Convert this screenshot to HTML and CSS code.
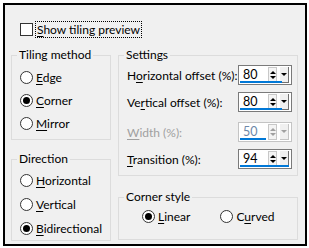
FILE: index.html
```html
<!DOCTYPE html>
<html lang="en">
<head>
  <meta charset="UTF-8">
  <title>Tiling</title>
  <link rel="stylesheet" href="styles.css">
</head>
<body>
  <div class="dialog">
    <!-- preview toggle -->
    <label class="check">
      <span class="box"></span>
      <span class="focus"><u>S</u>how tiling preview</span>
    </label>

    <div class="groups">
      <div class="col">
        <fieldset class="tiling">
          <legend>Tiling method</legend>
          <div class="radio"><span class="dot"></span><span><u>E</u>dge</span></div>
          <div class="radio"><span class="dot on"></span><span><u>C</u>orner</span></div>
          <div class="radio"><span class="dot"></span><span><u>M</u>irror</span></div>
        </fieldset>
        <fieldset class="direction">
          <legend>Direction</legend>
          <div class="radio"><span class="dot"></span><span><u>H</u>orizontal</span></div>
          <div class="radio"><span class="dot"></span><span><u>V</u>ertical</span></div>
          <div class="radio"><span class="dot on"></span><span><u>B</u>idirectional</span></div>
        </fieldset>
      </div>

      <div class="col">
        <fieldset class="settings">
          <legend>Settings</legend>
          <div class="row">
            <span>H<u>o</u>rizontal offset (%):</span>
            <div class="spin"><span class="val">80</span><span class="arrows"><i class="up"></i><i class="down"></i></span><span class="drop"><i class="down"></i></span><span class="bar" style="width:80%"></span></div>
          </div>
          <div class="row">
            <span>Ve<u>r</u>tical offset (%):</span>
            <div class="spin"><span class="val">80</span><span class="arrows"><i class="up"></i><i class="down"></i></span><span class="drop"><i class="down"></i></span><span class="bar" style="width:80%"></span></div>
          </div>
          <div class="row off">
            <span><u>W</u>idth (%):</span>
            <div class="spin"><span class="val">50</span><span class="arrows"><i class="up"></i><i class="down"></i></span><span class="drop"><i class="down"></i></span><span class="bar" style="width:50%"></span></div>
          </div>
          <div class="row">
            <span><u>T</u>ransition (%):</span>
            <div class="spin"><span class="val">94</span><span class="arrows"><i class="up"></i><i class="down"></i></span><span class="drop"><i class="down"></i></span><span class="bar" style="width:94%"></span></div>
          </div>
        </fieldset>
        <fieldset class="corner">
          <legend>Corner style</legend>
          <div class="pair">
            <div class="radio"><span class="dot on"></span><span><u>L</u>inear</span></div>
            <div class="radio"><span class="dot"></span><span>C<u>u</u>rved</span></div>
          </div>
        </fieldset>
      </div>
    </div>
  </div>
</body>
</html>
```

FILE: styles.css
```css
* {box-sizing: border-box;}
body {
  margin: 0;
  background: #fff;
  font-family: Lato, "Noto Sans", sans-serif;
  font-size: 12px;
  color: #000;
}
u {text-decoration-thickness: 1px; text-underline-offset: 2px;}

/* Dialog frame */
.dialog {
  margin: 3px;
  width: 304px;
  height: 243px;
  border: 2px solid #000;
  background: #f0f0f0;
  padding: 16px 6px 0;
  white-space: nowrap;
}

/* Preview checkbox */
.check {display: flex; align-items: center; gap: 3px; margin-left: 9px; height: 17px;}
.box {width: 13px; height: 13px; border: 1px solid #333; background: #fff;}
.check .focus {outline: 1px dotted #000; outline-offset: 0; padding: 0 1px; line-height: 15px;}

/* Group boxes */
.groups {display: grid; grid-template-columns: 100px 180px; column-gap: 7px; margin-top: 9px;}
.col {display: flex; flex-direction: column;}
fieldset {margin: 0; border: 1px solid #dcdcdc; padding: 0; min-width: 0;}
legend {margin-left: 5px; padding: 0 2px; line-height: 16px;}

.tiling {padding: 3px 0 4px; height: 93px;}
.direction {margin-top: 11px; padding: 1px 0 0; height: 90px;}
.settings {padding: 1px 5px 0 8px; height: 129px;}
.settings legend {margin-left: -3px;}
.corner {margin-top: 13px; height: 51px;}

/* Radios */
.radio {display: flex; align-items: center; gap: 3px; height: 23px; padding-left: 8px;}
.direction .radio {height: 24px;}
.dot {
  width: 13px; height: 13px; border-radius: 50%;
  border: 1px solid #333; background: #fff;
  display: flex; align-items: center; justify-content: center;
}
.dot.on::after {content: ""; width: 7px; height: 7px; border-radius: 50%; background: #000;}
.pair {display: flex; gap: 30px; padding-left: 23px;}
.pair .radio {padding-left: 0;}

/* Settings rows */
.row {display: flex; align-items: center; justify-content: space-between; height: 20px; margin-top: 7px;}
legend + .row {margin-top: 1px;}
.row.off {margin-top: 10px; color: #a0a0a0;}

.spin {
  position: relative;
  width: 54px; height: 20px;
  border: 1px solid #7a7a7a;
  background: #fff;
  display: flex; align-items: center;
}
.spin .val {flex: 1; padding-left: 4px; line-height: 16px; font-size: 12.5px;}
.spin .arrows {
  width: 9px; height: 16px; margin-right: 3px;
  display: flex; flex-direction: column; justify-content: center; align-items: center;
  background: #f4f4f4; border: 1px solid #c8c8c8;
}
.spin .arrows i {display: block; width: 0; height: 0; border-left: 3px solid transparent; border-right: 3px solid transparent;}
.spin .arrows .up {border-bottom: 3px solid #000; margin-bottom: 2px;}
.spin .arrows .down {border-top: 3px solid #000;}
.spin .drop {
  width: 9px; height: 16px; margin-right: 2px;
  background: #f0f0f0; border-right: 1px solid #707070; border-bottom: 1px solid #707070;
  display: flex; align-items: center; justify-content: center;
}
.spin .drop i {display: block; width: 0; height: 0; border-left: 3px solid transparent; border-right: 3px solid transparent; border-top: 3px solid #000;}
.spin .bar {position: absolute; left: 1px; bottom: 1px; height: 2px; background: #0078d7;}

.row.off .spin {border-color: #c4c4c4;}
.row.off .val {color: #6d88a8;}
.row.off .arrows i.up {border-bottom-color: #a0a0a0;}
.row.off .arrows i.down, .row.off .drop i {border-top-color: #a0a0a0;}
.row.off .drop {border-color: #c4c4c4;}
```
